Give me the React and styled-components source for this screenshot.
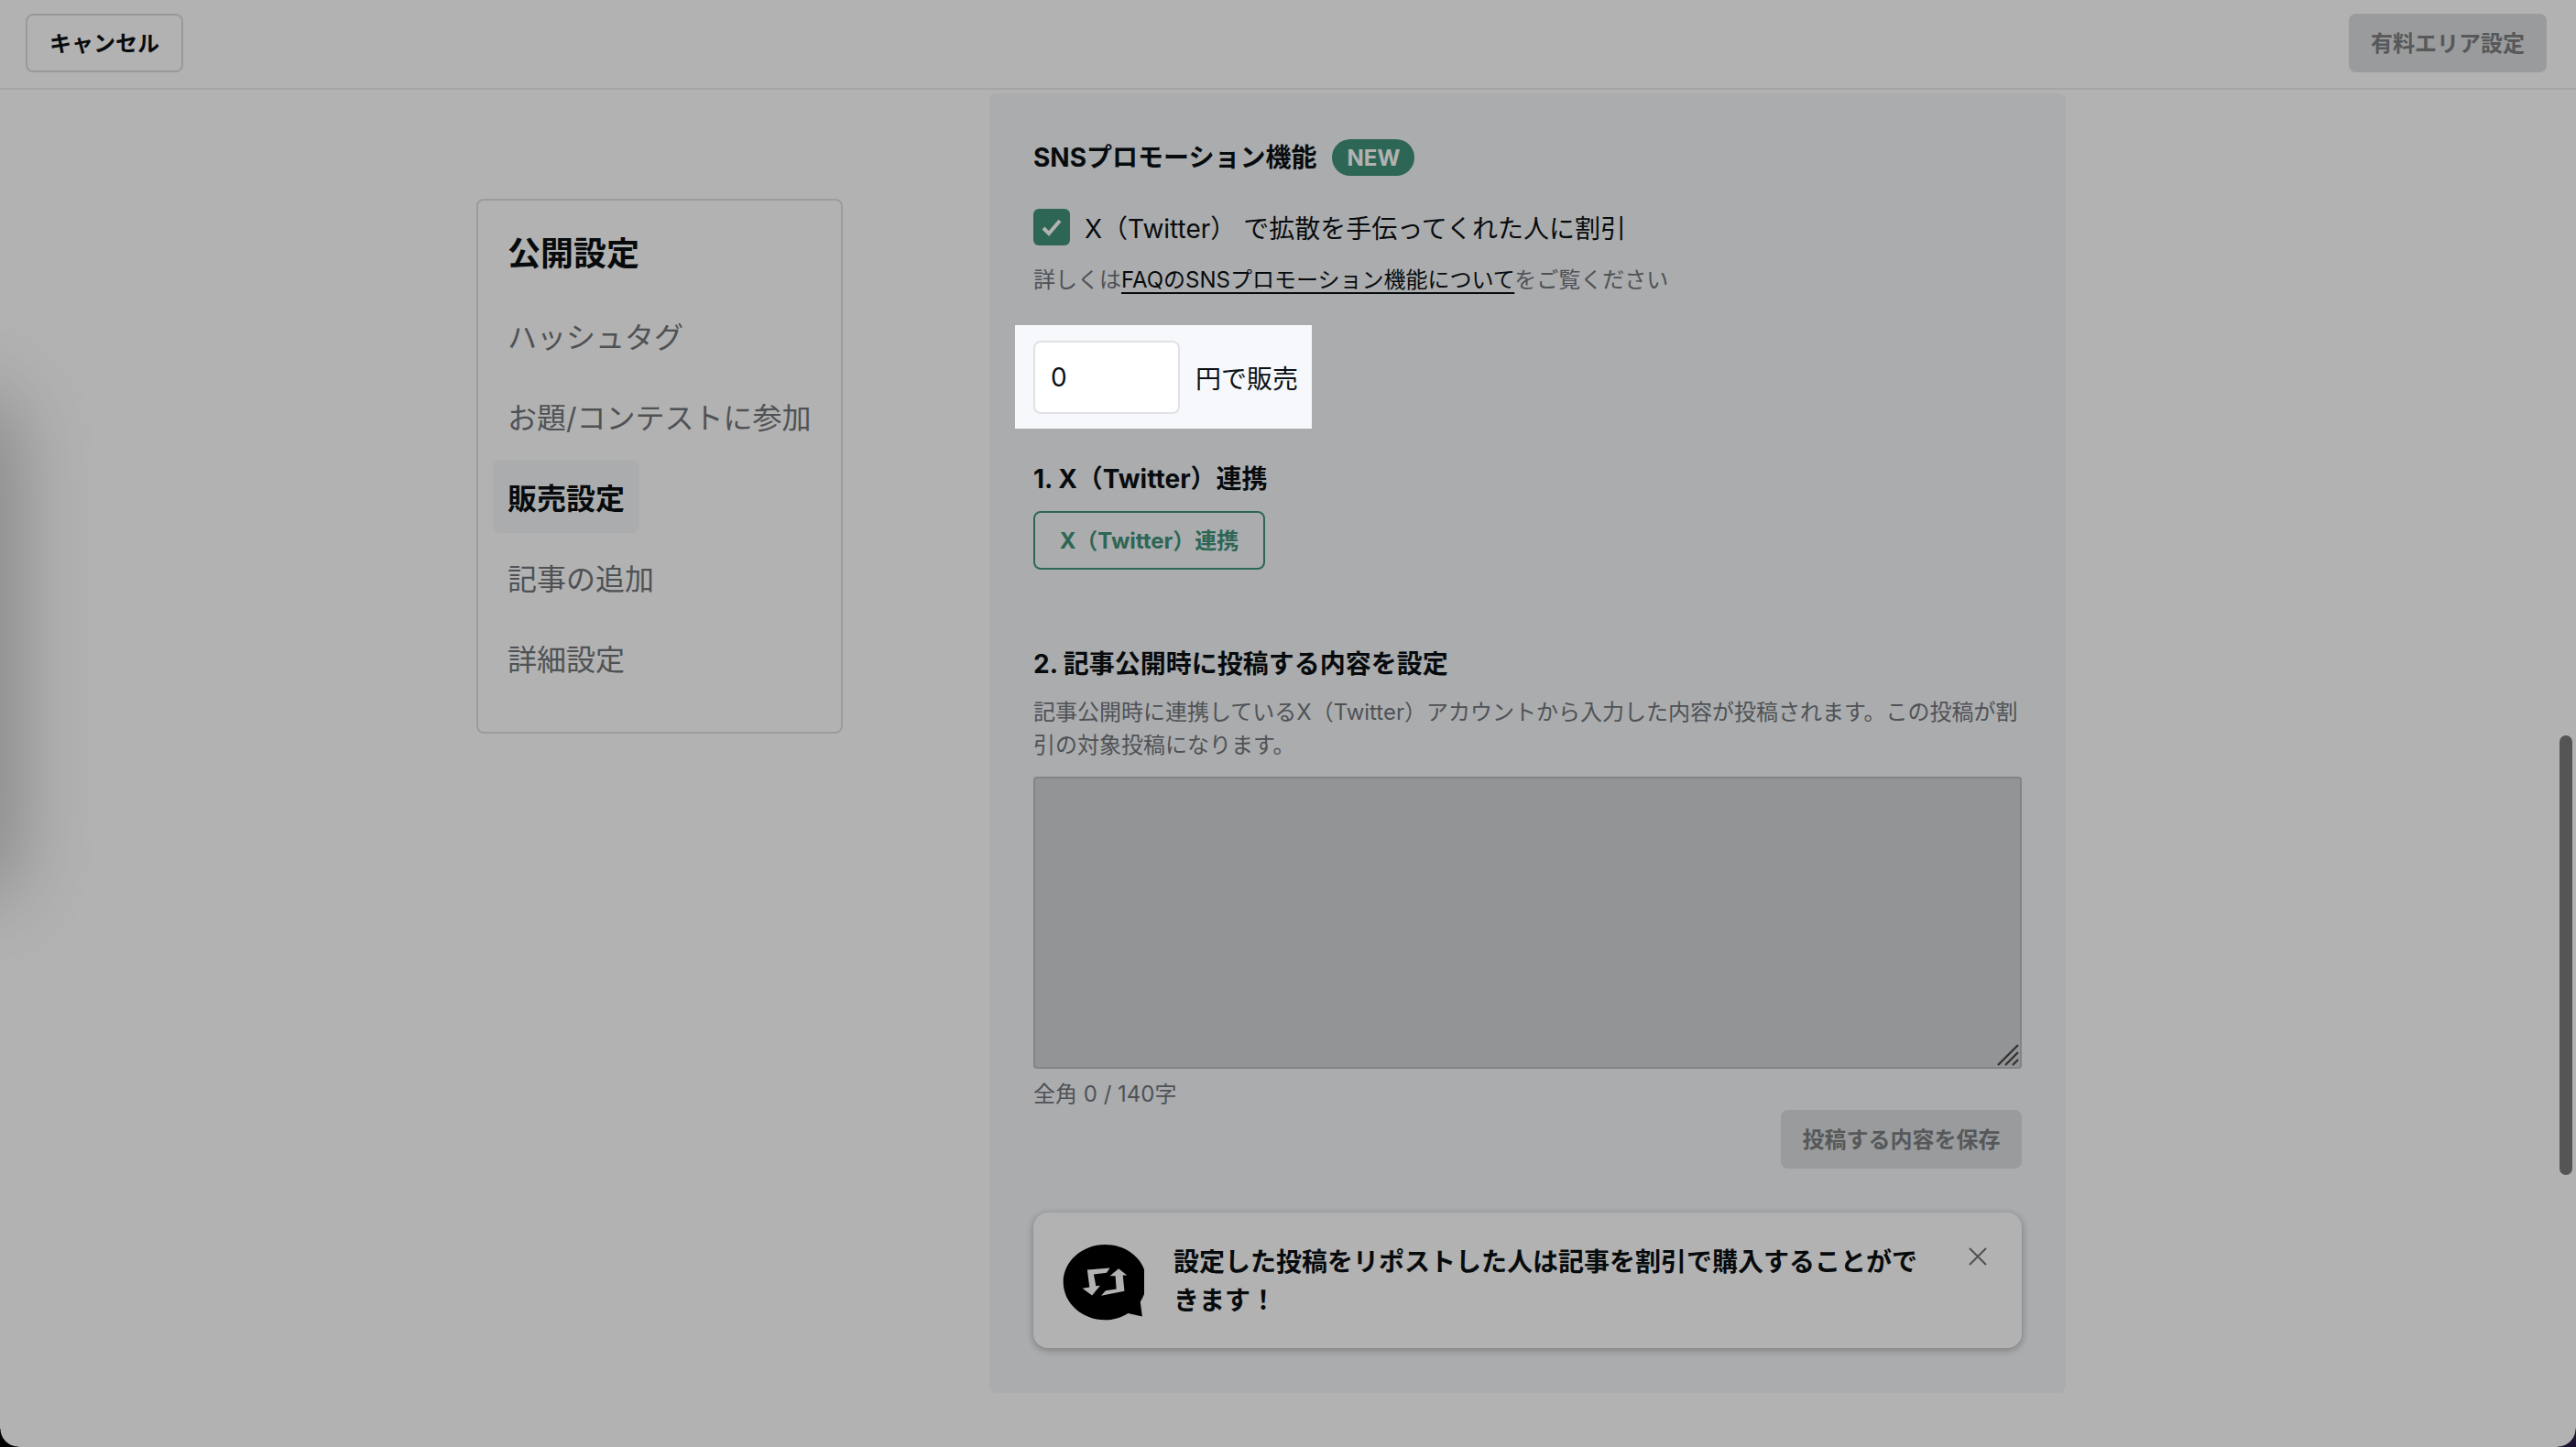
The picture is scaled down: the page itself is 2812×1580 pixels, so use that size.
import React from "react"
import styled, { createGlobalStyle } from "styled-components"

const GlobalStyle = createGlobalStyle`
  html, body {
    margin: 0;
    height: 100%;
    background: #fff;
  }
  body {
    font-family: Inter, "Noto Sans CJK JP", sans-serif;
    color: #0b1014;
  }
  * {
    box-sizing: border-box;
  }
`

const Page = styled.div`
  position: relative;
  width: 2812px;
  height: 1580px;
  overflow: hidden;
  background: #fff;
`

const Header = styled.header`
  display: flex;
  align-items: center;
  justify-content: space-between;
  height: 98px;
  padding: 0 32px 2px 28px;
  border-bottom: 2px solid #ececec;
`

const BaseButton = styled.button`
  height: 64px;
  padding: 0 0 3px;
  border-radius: 8px;
  font-family: inherit;
  font-size: 24px;
  font-weight: 700;
`

const CancelButton = styled(BaseButton)`
  width: 172px;
  border: 2px solid #dcdcdc;
  background: #fff;
  color: #0b1014;
`

const MutedButton = styled(BaseButton)`
  width: ${props => props.$width}px;
  border: none;
  background: #dcdee0;
  color: #7b7f82;
`

const Main = styled.main`
  display: flex;
  align-items: flex-start;
  padding: 4px 0 0 520px;
`

const Nav = styled.nav`
  display: flex;
  flex-direction: column;
  gap: 8px;
  width: 400px;
  margin-top: 115px;
  margin-right: 160px;
  padding: 31px 16px 41px;
  border: 2px solid #e0e0e0;
  border-radius: 8px;
`

const NavTitle = styled.h2`
  height: 54px;
  margin: 0 0 14px;
  padding-left: 16px;
  font-size: 36px;
  font-weight: 700;
  line-height: 54px;
`

const NavItem = styled.a`
  display: flex;
  align-items: center;
  align-self: flex-start;
  height: 80px;
  padding: 0 16px;
  border-radius: 8px;
  background: ${props => (props.$active ? "#f5f7fa" : "transparent")};
  color: ${props => (props.$active ? "#0b1014" : "#71767a")};
  font-size: 32px;
  font-weight: ${props => (props.$active ? 700 : 400)};
  white-space: nowrap;
`

const Panel = styled.section`
  display: flex;
  flex-direction: column;
  align-items: flex-start;
  width: 1175px;
  height: 1419px;
  padding: 46px 48px 0;
  border-radius: 8px;
  background: #f5f7fa;
`

const TitleRow = styled.div`
  display: flex;
  align-items: center;
  gap: 17px;
  height: 48px;
`

const Title = styled.h3`
  margin: ${props => props.$top || 0}px 0 0;
  font-size: 28px;
  font-weight: 700;
  line-height: 48px;
`

const NewTag = styled.span`
  display: flex;
  align-items: center;
  justify-content: center;
  width: 90px;
  height: 40px;
  border-radius: 20px;
  background: #42927a;
  color: #fff;
  font-size: 24px;
  font-weight: 700;
`

const CheckRow = styled.label`
  display: flex;
  align-items: center;
  gap: 16px;
  height: 40px;
  margin-top: 32px;
  font-size: 28px;
  line-height: 36px;
`

const CheckText = styled.span`
  margin-top: 3px;
`

const CheckBox = styled.span`
  display: flex;
  align-items: center;
  justify-content: center;
  width: 40px;
  height: 40px;
  border-radius: 6px;
  background: #42927a;
`

const Hint = styled.p`
  margin: ${props => props.$top}px 0 0;
  color: #71767a;
  font-size: 24px;
  line-height: 36px;
`

const HintLink = styled.a`
  color: #0b1014;
  text-decoration: underline;
  text-underline-offset: 5px;
  text-decoration-thickness: 2px;
`

const Spotlight = styled.div`
  position: relative;
  z-index: 10;
  display: flex;
  align-items: center;
  gap: 17px;
  width: 324px;
  height: 113px;
  margin: 31px 0 0 -20px;
  padding: 0 20px;
  background: #f6f8fb;
  box-shadow: 0 0 0 4000px rgba(0, 0, 0, 0.3);
`

const PriceInput = styled.input`
  width: 160px;
  height: 80px;
  padding: 0 17px;
  border: 2px solid #e1e2e6;
  border-radius: 8px;
  background: #fff;
  color: #0b1014;
  font-family: inherit;
  font-size: 28px;
`

const PriceLabel = styled.span`
  font-size: 28px;
  white-space: nowrap;
`

const LinkButton = styled(BaseButton)`
  width: 253px;
  margin-top: 11px;
  border: 2px solid #42927a;
  background: transparent;
  color: #42927a;
`

const TextBox = styled.div`
  position: relative;
  width: 1079px;
  height: 319px;
  margin-top: 16px;
`

const TextArea = styled.textarea`
  display: block;
  width: 100%;
  height: 100%;
  border: 2px solid #bdbdbf;
  border-radius: 4px;
  background: #d3d4d6;
  resize: none;
`

const Grip = styled.svg`
  position: absolute;
  right: 3px;
  bottom: 3px;
`

const Counter = styled.div`
  margin-top: 10px;
  color: #71767a;
  font-size: 24px;
  line-height: 36px;
`

const SaveRow = styled.div`
  display: flex;
  justify-content: flex-end;
  width: 100%;
  margin-top: -1px;
`

const Banner = styled.div`
  display: flex;
  width: 1079px;
  height: 148px;
  margin-top: 48px;
  padding: 24px 32px 0;
  border-radius: 16px;
  background: #fff;
  box-shadow: 0 2px 8px rgba(0, 0, 0, 0.3);
`

const BannerIcon = styled.svg`
  flex: none;
  margin: 11px 32px 0 0;
`

const BannerText = styled.p`
  flex: none;
  width: 830px;
  margin: 9px 0 0;
  font-size: 28px;
  font-weight: 700;
  line-height: 42px;
`

const CloseIcon = styled.svg`
  flex: none;
  margin: 13px 5px 0 auto;
`

const Scrollbar = styled.div`
  position: absolute;
  top: 803px;
  right: 4px;
  width: 14px;
  height: 480px;
  border-radius: 7px;
  background: #7a7a7a;
`

const EdgeShadow = styled.div`
  position: absolute;
  top: 440px;
  left: -60px;
  width: 60px;
  height: 530px;
  border-radius: 30px;
  box-shadow: 0 0 90px 10px rgba(0, 0, 0, 0.3);
`

const Corner = styled.div`
  position: absolute;
  z-index: 20;
  bottom: 0;
  ${props => props.$side}: 0;
  width: 20px;
  height: 20px;
  background: radial-gradient(
    circle at ${props => (props.$side === "left" ? "100% 0" : "0 0")},
    transparent 19px,
    ${props => (props.$side === "left" ? "#000" : "#1d1530")} 20px
  );
`

const navItems = ["ハッシュタグ", "お題/コンテストに参加", "販売設定", "記事の追加", "詳細設定"]

const App = () => {
  return (
    <Page>
      <GlobalStyle />
      <Header>
        <CancelButton>キャンセル</CancelButton>
        <MutedButton $width={216}>有料エリア設定</MutedButton>
      </Header>
      <Main>
        <Nav>
          <NavTitle>公開設定</NavTitle>
          {navItems.map(item => (
            <NavItem key={item} $active={item === "販売設定"}>
              {item}
            </NavItem>
          ))}
        </Nav>
        <Panel>
          <TitleRow>
            <Title>SNSプロモーション機能</Title>
            <NewTag>NEW</NewTag>
          </TitleRow>
          <CheckRow>
            <CheckBox>
              <svg width="24" height="24" viewBox="0 0 24 24" fill="none">
                <path d="M3 13l6 6L21 5" stroke="#fff" strokeWidth="4" />
              </svg>
            </CheckBox>
            <CheckText>X（Twitter） で拡散を手伝ってくれた人に割引</CheckText>
          </CheckRow>
          <Hint $top={20}>
            詳しくは<HintLink>FAQのSNSプロモーション機能について</HintLink>をご覧ください
          </Hint>
          <Spotlight>
            <PriceInput defaultValue="0" />
            <PriceLabel>円で販売</PriceLabel>
          </Spotlight>
          <Title $top={31}>1. X（Twitter）連携</Title>
          <LinkButton>X（Twitter）連携</LinkButton>
          <Title $top={79}>2. 記事公開時に投稿する内容を設定</Title>
          <Hint $top={11}>
            記事公開時に連携しているX（Twitter）アカウントから入力した内容が投稿されます。この投稿が割引の対象投稿になります。
          </Hint>
          <TextBox>
            <TextArea disabled />
            <Grip width="24" height="24" viewBox="0 0 24 24" stroke="#4a4a4a" strokeWidth="2.4">
              <path d="M1 23L23 1M9 23L23 9M17 23l6-6" />
            </Grip>
          </TextBox>
          <Counter>全角 0 / 140字</Counter>
          <SaveRow>
            <MutedButton $width={263}>投稿する内容を保存</MutedButton>
          </SaveRow>
          <Banner>
            <BannerIcon width="89" height="83" viewBox="0 0 250 235">
              <path
                d="M130 0c72 0 128 50 128 115 0 22-7 43-19 62l6 45-44-10c-22 14-46 21-71 21C60 233 1 181 1 116S60 0 130 0z"
                fill="#000"
              />
              <path
                d="M145 72L75 78l7 54-22 3 30 22 25-30-13 1-7-36 40-5zM172 74l-27 23h17l3 40-33 5-14 16 72-14-5-49h13z"
                fill="#fff"
              />
            </BannerIcon>
            <BannerText>設定した投稿をリポストした人は記事を割引で購入することができます！</BannerText>
            <CloseIcon width="22" height="22" viewBox="0 0 22 22" stroke="#71767a" strokeWidth="2">
              <path d="M2 2l18 18M20 2L2 20" />
            </CloseIcon>
          </Banner>
        </Panel>
      </Main>
      <Scrollbar />
      <EdgeShadow />
      <Corner $side="left" />
      <Corner $side="right" />
    </Page>
  )
}

export default App
